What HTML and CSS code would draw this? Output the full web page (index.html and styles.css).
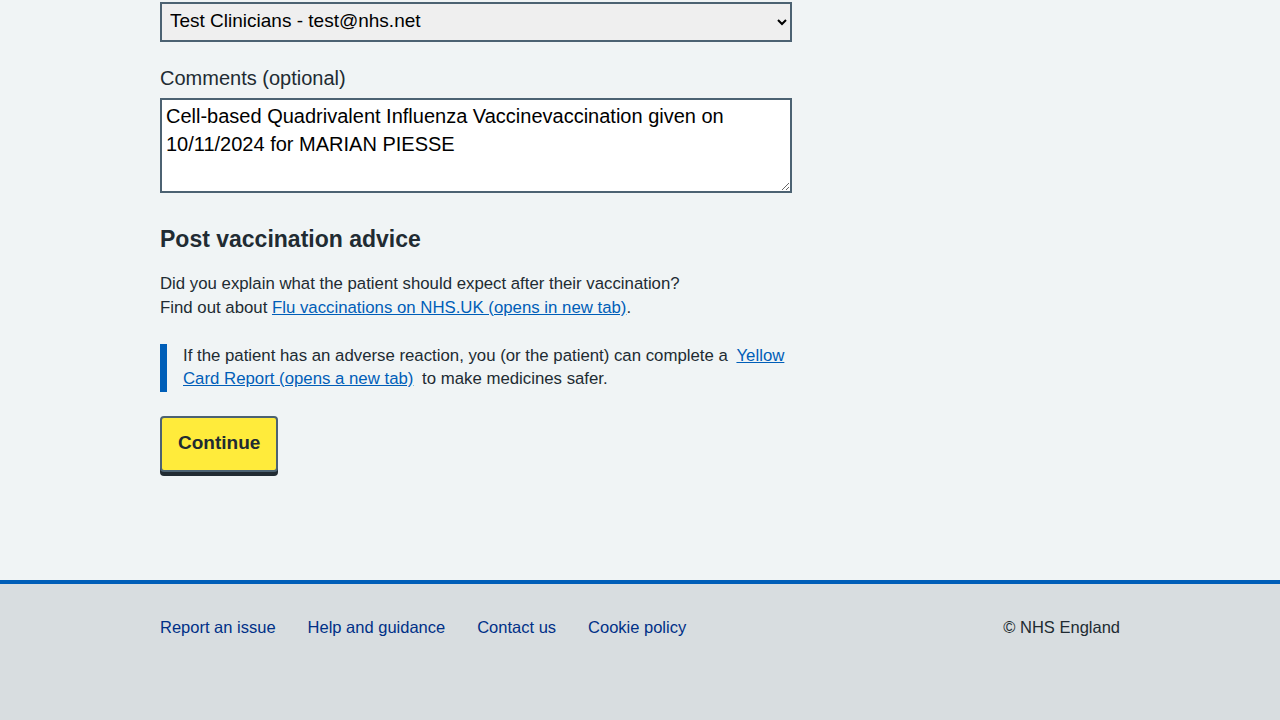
FILE: index.html
```html
<!DOCTYPE html>
<html lang="en">
<head>
<meta charset="utf-8">
<title>Record vaccination</title>
<link rel="stylesheet" href="styles.css">
</head>
<body>
<main class="page">
  <div class="container">
    <form class="form">
      <div class="field field-select">
        <select class="select">
          <option>Test Clinicians - test@nhs.net</option>
        </select>
      </div>
      <div class="field">
        <label class="label" for="comments">Comments (optional)</label>
        <textarea id="comments" class="textarea" rows="3">Cell-based Quadrivalent Influenza Vaccinevaccination given on 10/11/2024 for MARIAN PIESSE</textarea>
      </div>
      <h2 class="heading">Post vaccination advice</h2>
      <p class="body">Did you explain what the patient should expect after their vaccination?<br>Find out about <a href="#" class="link">Flu vaccinations on NHS.UK (opens in new tab)</a>.</p>
      <div class="inset">
        <p>If the patient has an adverse reaction, you (or the patient) can complete a <a href="#" class="link inset-link">Yellow Card Report (opens a new tab)</a> to make medicines safer.</p>
      </div>
      <button type="button" class="button">Continue</button>
    </form>
  </div>
</main>
<footer class="footer">
  <div class="container footer-inner">
    <ul class="footer-links">
      <li><a href="#">Report an issue</a></li>
      <li><a href="#">Help and guidance</a></li>
      <li><a href="#">Contact us</a></li>
      <li><a href="#">Cookie policy</a></li>
    </ul>
    <p class="copyright">© NHS England</p>
  </div>
</footer>
</body>
</html>
```
FILE: styles.css
```css
* { box-sizing: border-box; }
html, body { margin: 0; padding: 0; }
body {
  background: #f0f4f5;
  color: #212b32;
  font-family: "Liberation Sans", Arial, sans-serif;
  font-size: 16.8px;
  line-height: 24px;
  height: 720px;
  display: flex;
  flex-direction: column;
}
.page { flex: 1; }
.container { width: 960px; margin: 0 auto; }
.form { width: 632px; padding-top: 2px; display: flex; flex-direction: column; align-items: flex-start; }
.field { width: 100%; margin-bottom: 24px; }
.field-select { margin-bottom: 22px; }
.select {
  width: 100%;
  height: 40px;
  border: 2px solid #4c6272;
  border-radius: 0;
  background: #efefef;
  color: #000;
  font-family: inherit;
  font-size: 19px;
  padding: 0 4px 4px;
}
.label {
  display: block;
  font-size: 20px;
  line-height: 28px;
  margin-bottom: 6px;
  color: #212b32;
}
.textarea {
  display: block;
  width: 100%;
  height: 95px;
  border: 2px solid #4c6272;
  border-radius: 0;
  background: #fff;
  color: #000;
  font-family: inherit;
  font-size: 20px;
  line-height: 28px;
  padding: 2px 4px;
  resize: vertical;
}
.heading {
  font-size: 23px;
  line-height: 32px;
  font-weight: 700;
  margin: 6px 0 17px;
}
.body { margin: 0 0 24px; }
.link { color: #005eb8; text-decoration: underline; }
.inset-link { margin: 0 4px; }
.inset {
  border-left: 7px solid #005eb8;
  padding: 0 0 2px 16px;
  margin-bottom: 24px;
  width: 640px;
}
.inset p { margin: 0; line-height: 23px; }
.button {
  background: #ffeb3b;
  color: #212b32;
  border: 2px solid #4c6272;
  border-radius: 4px;
  box-shadow: 0 4px 0 #212b32;
  font-family: inherit;
  font-size: 19px;
  font-weight: 700;
  padding: 11px 16px 13px;
  line-height: 28px;
}
.footer {
  background: #d8dde0;
  border-top: 4px solid #005eb8;
  height: 140px;
  padding-top: 31px;
}
.footer-inner { display: flex; justify-content: space-between; align-items: flex-start; }
.footer-links { list-style: none; margin: 0; padding: 0; display: flex; gap: 32px; }
.footer-links a { color: #003087; text-decoration: none; font-size: 16.5px; }
.copyright { margin: 0; font-size: 16.5px; }
```
